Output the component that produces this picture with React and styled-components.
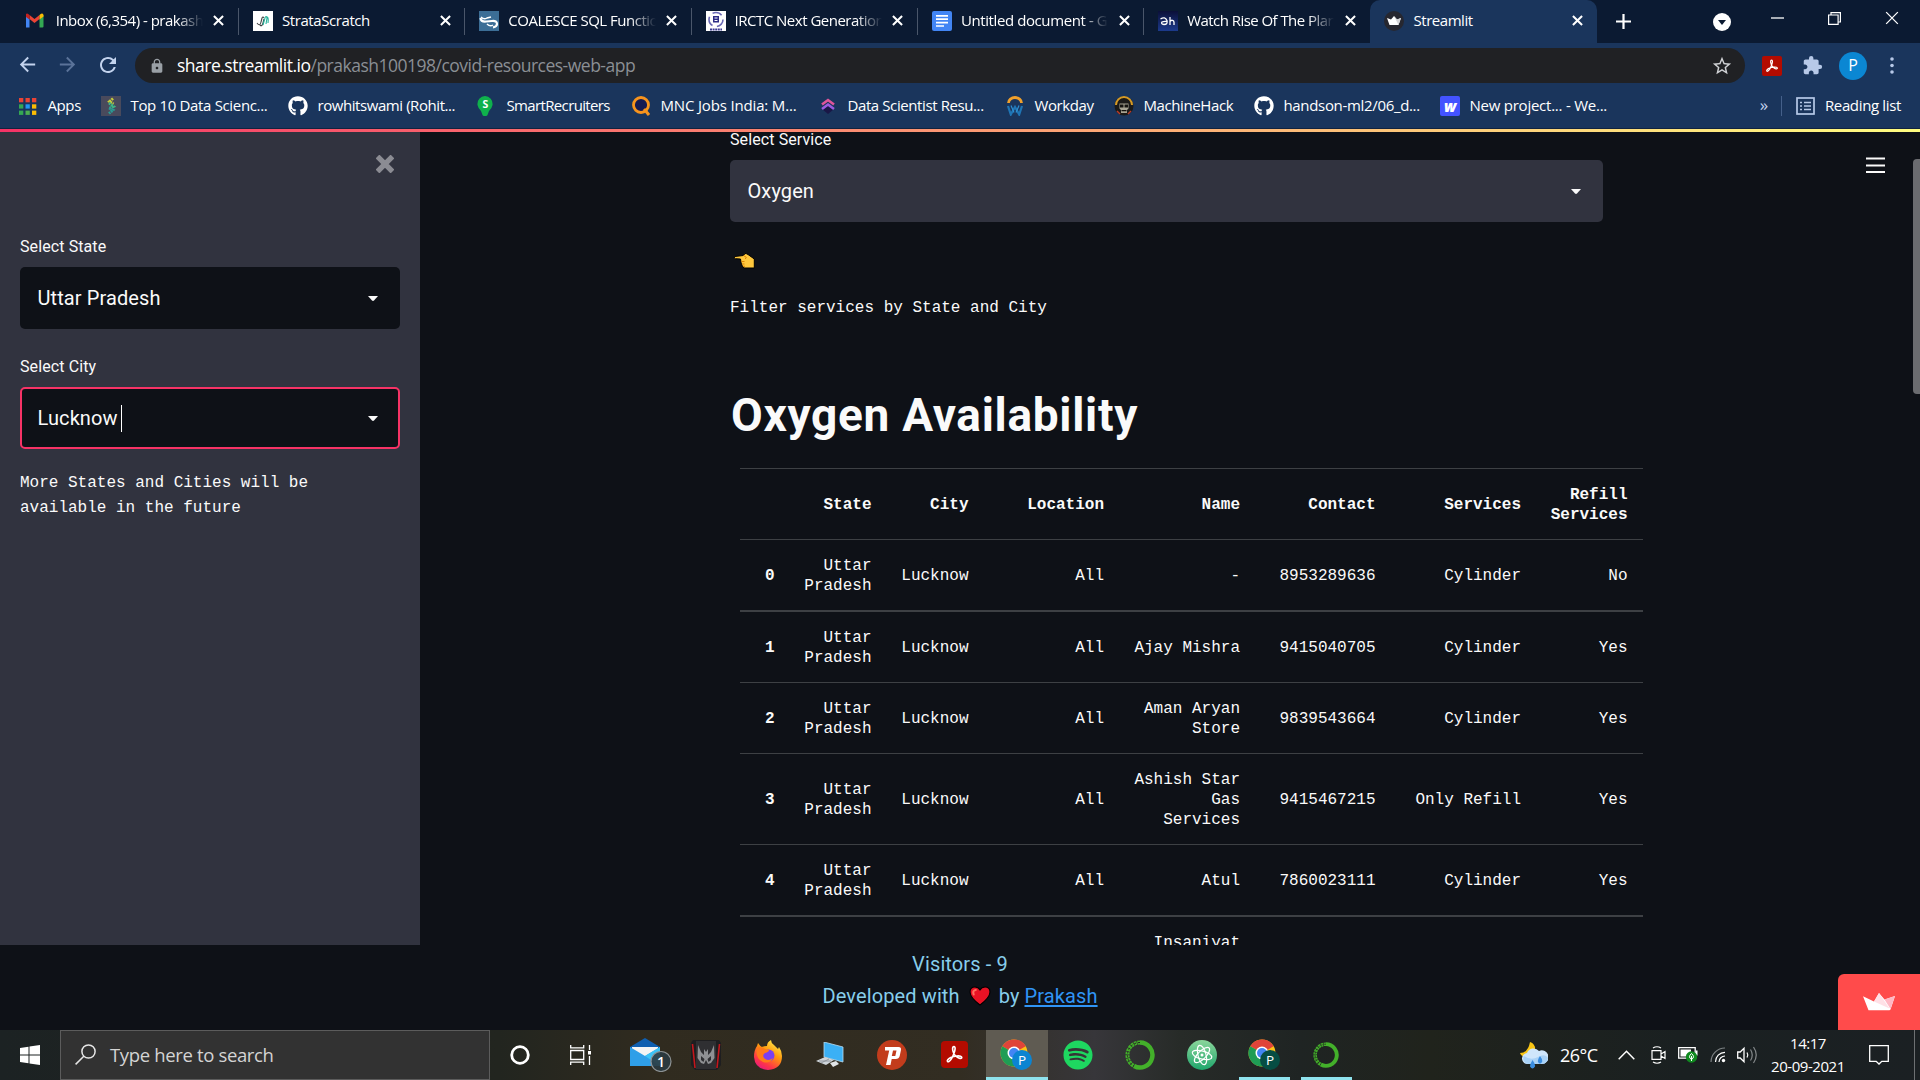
import React from "react";
import styled, { createGlobalStyle, css } from "styled-components";
import { FaGithub, FaSpotify } from "react-icons/fa";
import { MdExtension, MdLock, MdStarBorder, MdRefresh, MdArrowBack, MdArrowForward } from "react-icons/md";

const GlobalStyle = createGlobalStyle`
  * { box-sizing: border-box; }
  body { margin: 0; background: #0e1117; overflow: hidden; }
  svg { display: block; flex: none; }
`;

const ui = `"Open Sans", "Noto Sans", sans-serif`;
const plex = `Roboto, "Noto Sans", sans-serif`;
const mono = `"Liberation Mono", "DejaVu Sans Mono", monospace`;

const Screen = styled.div`
  width: 1920px;
  height: 1080px;
  display: flex;
  flex-direction: column;
  overflow: hidden;
  font-family: ${ui};
  color: #fff;
`;

/* ---------- browser chrome ---------- */

const TabStrip = styled.div`
  height: 43px;
  flex: none;
  display: flex;
  background: #0b1a32;
  padding-left: 12.7px;
`;

const Tab = styled.div`
  width: 226.3px;
  flex: none;
  display: flex;
  align-items: center;
  padding: 0 11px 2px 14px;
  font-size: 15px;
  border-right: 1px solid transparent;
  ${(p) => p.$divider && css`
    border-image: linear-gradient(transparent 9px, #4a566a 9px, #4a566a 34px, transparent 34px) 1;
  `}
  ${(p) => p.$active && css`
    background: #1a355c;
    border-radius: 10px 10px 0 0;
    width: 227px;
  `}
`;

const TabTitle = styled.div`
  flex: 1;
  margin: -1px 0 0 9px;
  overflow: hidden;
  white-space: nowrap;
  letter-spacing: ${(p) => p.$track || "-0.45px"};
  ${(p) => p.$fade && css`
    mask-image: linear-gradient(90deg, #000 calc(100% - 28px), transparent calc(100% - 2px));
  `}
`;

const CloseSlot = styled.div`
  width: 16px;
  margin-left: 6px;
  display: flex;
  justify-content: center;
`;

const NewTab = styled.div`
  width: 53px;
  display: flex;
  align-items: center;
  justify-content: center;
`;

const WindowControls = styled.div`
  margin-left: auto;
  display: flex;
  align-items: center;
`;

const WindowButton = styled.div`
  width: ${(p) => p.$w || 57}px;
  height: 36px;
  display: flex;
  align-items: center;
  justify-content: center;
  align-self: ${(p) => (p.$low ? "center" : "flex-start")};
`;

const Toolbar = styled.div`
  height: 45px;
  flex: none;
  display: flex;
  align-items: center;
  background: #1a355c;
`;

const NavGroup = styled.div`
  width: 135px;
  display: flex;
  gap: 17px;
  padding: 0 0 1px 16px;
  color: #c3d3ee;
`;

const Omnibox = styled.div`
  width: 1610px;
  height: 35px;
  display: flex;
  align-items: center;
  border-radius: 18px;
  background: #202124;
  padding: 0 12px 0 14px;
`;

const Url = styled.div`
  flex: 1;
  margin: -1px 0 0 12px;
  font-size: 17.5px;
  letter-spacing: -0.5px;
  color: #8b8f94;
  span { color: #fff; }
`;

const ExtensionGroup = styled.div`
  flex: 1;
  display: flex;
  align-items: center;
  padding-left: 17px;
`;

const ExtensionSlot = styled.div`
  margin-left: 20px;
  color: #b7c9e8;
`;

const Avatar = styled.div`
  width: 28px;
  height: 28px;
  margin: 0 23px 0 16px;
  border-radius: 50%;
  background: #0b87d3;
  font-size: 16px;
  line-height: 27px;
  text-align: center;
`;

const BookmarkBar = styled.div`
  height: 41px;
  flex: none;
  display: flex;
  align-items: center;
  background: #1a355c;
  border-bottom: 1px solid #11233f;
  padding: 0 0 4px 18px;
  font-size: 15px;
  white-space: nowrap;
`;

const Bookmark = styled.div`
  width: ${(p) => p.$w}px;
  display: flex;
  align-items: center;
  gap: ${(p) => p.$gap || 9.5}px;
  letter-spacing: ${(p) => p.$track || "-0.4px"};
`;

const BookmarkLabel = styled.span`
  margin-top: -2px;
`;

const IconSlot = styled.div`
  width: 20px;
  height: 20px;
  flex: none;
  display: flex;
  align-items: center;
  justify-content: center;
`;

const BookmarkEnd = styled.div`
  margin-left: auto;
  display: flex;
  align-items: center;
  padding-right: 19px;
  letter-spacing: -0.35px;
`;

const Overflow = styled.span`
  color: #c3d3ee;
  font-size: 17px;
  margin: -2px 13px 0 0;
  line-height: 20px;
`;

const Separator = styled.span`
  width: 1px;
  height: 20px;
  background: #45608a;
  margin-right: 14px;
`;

const ReadingLabel = styled.span`
  margin: -2px 0 0 10px;
`;

const FavTile = styled.div`
  width: ${(p) => p.$w || 20}px;
  height: 20px;
  border-radius: ${(p) => p.$r || 0}px;
  background: ${(p) => p.$bg};
  color: ${(p) => p.$fg || "#fff"};
  display: flex;
  align-items: center;
  justify-content: center;
  font: ${(p) => p.$font || `400 12px ${ui}`};
`;

/* ---------- streamlit page ---------- */

const RainbowLine = styled.div`
  height: 3px;
  flex: none;
  background: linear-gradient(90deg, #f63366, #fffd80);
`;

const Page = styled.div`
  height: 813px;
  flex: none;
  display: flex;
  position: relative;
  background: #0e1117;
  overflow: hidden;
  color: #fafafa;
`;

const Sidebar = styled.aside`
  width: 420px;
  flex: none;
  background: #31333f;
  padding: 23px 20px;
`;

const SidebarTop = styled.div`
  height: 79px;
  display: flex;
  justify-content: flex-end;
  padding-right: 6px;
`;

const Field = styled.div`
  margin-bottom: ${(p) => p.$gap || 25}px;
`;

const FieldLabel = styled.div`
  height: 33px;
  line-height: 25px;
  font-family: ${plex};
  font-size: 16px;
  letter-spacing: 0.1px;
`;

const SelectBox = styled.div`
  height: 62px;
  display: flex;
  align-items: center;
  justify-content: space-between;
  padding: 0 20.5px 0 15.5px;
  border-radius: 5px;
  border: 2px solid ${(p) => (p.$focused ? "#f63366" : "transparent")};
  background: ${(p) => p.$bg} border-box;
  font-family: ${plex};
  font-size: 20px;
  letter-spacing: 0.1px;
`;

const SelectValue = styled.span`
  display: flex;
  align-items: center;
`;

const TextCursor = styled.i`
  width: 1px;
  height: 27px;
  background: #fff;
  margin-left: 3px;
`;

const MonoText = styled.div`
  font-family: ${mono};
  font-size: 16px;
  line-height: 25px;
  white-space: pre-line;
`;

const Main = styled.main`
  width: 913px;
  margin-left: 310px;
  flex: none;
`;

const MainField = styled.div`
  width: 873px;
  padding-top: 28px;
  margin-top: -33px;
`;

const HandRow = styled.div`
  height: 74px;
  padding: 31px 0 0 3px;
`;

const Heading = styled.h1`
  margin: 66px 0 0 1px;
  height: 81px;
  font: 700 46px/56px ${plex};
  letter-spacing: 0.7px;
`;

const Table = styled.table`
  width: 903px;
  margin-left: 10px;
  table-layout: fixed;
  border-spacing: 0;
  font: 16px/20px ${mono};
`;

const Row = styled.tr`
  height: ${(p) => p.$h}px;
  th, td { border-top: ${(p) => p.$line || 1}px solid #3d4044; }
`;

const cell = css`
  padding: 2px 15.5px 0 10px;
  text-align: right;
  vertical-align: middle;
`;

const Th = styled.th`
  ${cell}
  font-weight: 700;
`;

const Td = styled.td`
  ${cell}
`;

const MenuButton = styled.div`
  position: absolute;
  top: 25px;
  right: 35px;
`;

const ScrollThumb = styled.div`
  position: absolute;
  top: 27px;
  right: 0;
  width: 7px;
  height: 235px;
  border-radius: 4px 0 0 4px;
  background: #6b6c70;
`;

const Footer = styled.footer`
  height: 85px;
  flex: none;
  position: relative;
  display: flex;
  flex-direction: column;
  align-items: center;
  padding-top: 3px;
  background: #0e1117;
  color: #87ceeb;
  font: 20px/32px ${plex};
`;

const FooterLine = styled.div`
  display: flex;
  align-items: center;
  letter-spacing: 0.12px;
`;

const Heart = styled.span`
  margin: 0 8px 0 9px;
`;

const Author = styled.a`
  margin-left: 5px;
  color: #3094f5;
  text-decoration: underline;
  text-decoration-thickness: 2px;
  text-underline-offset: 2px;
  text-decoration-skip-ink: none;
`;

const HostBadge = styled.div`
  position: absolute;
  right: 0;
  bottom: 0;
  width: 82px;
  height: 56px;
  border-top-left-radius: 6px;
  background: #ff4b4b;
  display: flex;
  align-items: center;
  justify-content: center;
`;

/* ---------- taskbar ---------- */

const Taskbar = styled.div`
  height: 50px;
  flex: none;
  display: flex;
  background: linear-gradient(90deg, #1c2223 0, #22251f 500px, #302b1f 650px, #322d22 960px, #37363a 1095px, #272b28 1180px, #1f2423 1300px, #20231c 1430px, #1a2021 1680px, #1b2023 100%);
`;

const StartButton = styled.div`
  width: 60px;
  display: flex;
  align-items: center;
  padding: 0 0 1px 20px;
`;

const SearchBox = styled.div`
  width: 430px;
  border: 1px solid #5c5c5c;
  background: #323232;
  display: flex;
  align-items: center;
  padding: 0 0 2px 14px;
  font-size: 18.5px;
  letter-spacing: -0.35px;
  color: #d4d4d4;
  gap: 14px;
`;

const TaskItem = styled.div`
  width: 62px;
  display: flex;
  align-items: center;
  justify-content: center;
  padding: 0 2px 1px 0;
  ${(p) => p.$active && css`
    background: #5f5b52;
    box-shadow: inset 0 -3px #8fe3ee;
  `}
  ${(p) => p.$running && css`
    background: linear-gradient(#8fe3ee, #8fe3ee) 5px bottom / 51px 3px no-repeat;
  `}
`;

const Tray = styled.div`
  flex: 1;
  display: flex;
  align-items: center;
  padding-left: 162px;
`;

const Temperature = styled.div`
  width: 58px;
  margin-left: 12px;
  font-size: 18px;
  letter-spacing: -0.5px;
`;

const TrayIcon = styled.div`
  width: ${(p) => p.$w}px;
  display: flex;
`;

const Clock = styled.div`
  width: 80px;
  text-align: center;
  font-size: 15px;
  line-height: 23px;
  letter-spacing: -0.45px;
  white-space: nowrap;
`;

const ActionCenter = styled.div`
  margin-left: 21px;
`;

const ShowDesktop = styled.div`
  width: 6px;
  height: 50px;
  margin-left: auto;
  border-left: 1px solid #6d7072;
`;

/* ---------- drawings ---------- */

const Cross = ({ size = 11, w = 2.2, color = "#fff" }) => (
  <svg width={size} height={size} viewBox="0 0 12 12">
    <path d="M1 1L11 11M11 1L1 11" stroke={color} strokeWidth={w} />
  </svg>
);

const Gmail = () => (
  <svg width="22" height="15" viewBox="1.5 0 22 15">
    <path d="M1 2v11.5q0 1 1 1h3V6z" fill="#4285f4" />
    <path d="M19 2v11.5q0 1-1 1h-3V6z" fill="#34a853" />
    <path d="M5 6V2l5 4 5-4v4l-5 4z" fill="#ea4335" />
    <path d="M1 2.5Q1 0 3.4.7L5 2v4.5L1 3.6z" fill="#c5221f" />
    <path d="M19 2.5Q19 0 16.6.7L15 2v4.5l4-3z" fill="#fbbc04" />
  </svg>
);

const Strata = () => (
  <svg width="20" height="20" viewBox="0 0 20 20">
    <path fill="#fff" d="M0 0h20v20H0z" />
    <path d="M4 12q3 4 4-1l1-4q1-2 2 0M7 14q2 2 3-2l1-4" fill="none" stroke="#444" strokeWidth="1.1" />
    <path d="M10 14l2-7q1-3 2 0l-1 6M13 6q3-1 2 6" fill="none" stroke="#27b39b" strokeWidth="1.1" />
  </svg>
);

const SqlTutorial = () => (
  <svg width="20" height="20" viewBox="0 0 20 20">
    <path fill="#3c6e96" d="M0 0h20v20H0z" />
    <path d="M1.500 7Q2 11 7 10.500l6-.5q5-.5 5 3 0 2.500-4 3.500" fill="none" stroke="#fff" strokeWidth="2.200" />
    <path d="M2 6q3 3 6 1l4-1M8 13q3 3 6 1" fill="none" stroke="#fff" strokeWidth="1.500" />
  </svg>
);

const Irctc = () => (
  <svg width="20" height="20" viewBox="0 0 20 20">
    <path fill="#fff" d="M0 0h20v20H0z" />
    <circle cx="10" cy="8.5" r="7" fill="none" stroke="#6a69b5" strokeWidth="1.6" strokeDasharray="10 4.600" />
    <path d="M7 5h6v6.500H7z" fill="#2d2c86" />
    <path d="M8.500 7h3M8.500 9.500h3" stroke="#fff" />
    <path d="M4 18.500h12" stroke="#3b3a93" strokeWidth="2" strokeDasharray="2 .6" />
  </svg>
);

const Docs = () => (
  <svg width="20" height="20" viewBox="0 0 20 20">
    <rect width="20" height="20" rx="2" fill="#4285f4" />
    <path d="M4 4.800h12M4 8.200h12M4 11.600h12M4 15h8" stroke="#fff" strokeWidth="1.700" />
  </svg>
);

const Hotstar = () => (
  <svg width="20" height="20" viewBox="0 0 20 20">
    <defs>
      <linearGradient id="hs" x1="0" y1="0" x2="0" y2="1">
        <stop stopColor="#0b0f38" />
        <stop offset="1" stopColor="#1c3a8c" />
      </linearGradient>
    </defs>
    <path fill="url(#hs)" d="M0 0h20v20H0z" />
    <path d="M2.500 8Q7 5 9 9.500 10 13.500 6 13.500 2.500 13 4 11q2-1 5-.5M12 6v8M12 10.500q1-1.500 2.500-1.200 1.500.3 1.500 2V14" fill="none" stroke="#fff" strokeWidth="1.300" />
  </svg>
);

const CrownTab = () => (
  <svg width="20" height="20" viewBox="0 0 20 20">
    <circle cx="10" cy="10" r="10" fill="#262730" />
    <path d="M3 7l4 1.500L10 5l3 3.500L17 7l-2.500 7h-9z" fill="#fff" />
    <path d="M10 5l3 3.500L17 7l-2.500 7z" fill="#d5d5d8" />
  </svg>
);

const AppsGrid = () => (
  <svg width="18" height="17" viewBox="0 0 18 17">
    {["#ea4335", "#ea4335", "#ea4335", "#34a853", "#2196f3", "#fbbc04", "#34a853", "#4caf50", "#fbbc04"].map((c, i) => (
      <rect key={i} x={(i % 3) * 6.5} y={Math.floor(i / 3) * 6.3} width="4.3" height="4.3" fill={c} />
    ))}
  </svg>
);

const DataSnake = () => (
  <svg width="20" height="20" viewBox="0 0 20 20">
    <path fill="#494a5c" d="M0 0h20v20H0z" />
    <path d="M12 2.500L8.500 5.500l4 2.500" fill="none" stroke="#c8cf3c" strokeWidth="2.800" strokeDasharray="2 .7" />
    <path d="M8 7l4.500 3.500-4.500 2" fill="none" stroke="#3fb588" strokeWidth="2.800" strokeDasharray="2 .7" />
    <path d="M8 12l4 2-4 3.500" fill="none" stroke="#2a9a94" strokeWidth="2.800" strokeDasharray="2 .7" />
  </svg>
);

const SmartPin = () => (
  <svg width="16" height="20" viewBox="0 0 16 20">
    <path d="M8 0a8 8 0 0 1 7.5 9Q15 12 12 15l-1.500 4q-.3 1-1.500 1H7q-1.200 0-1.500-1L4 15Q1 12 .5 9A8 8 0 0 1 8 0z" fill="#0fb14c" />
    <text x="8" y="11.500" textAnchor="middle" fontFamily="Open Sans" fontWeight="700" fontSize="10.500" fill="#fff">S</text>
  </svg>
);

const QuestIcon = () => (
  <svg width="20" height="20" viewBox="0 0 20 20">
    <circle cx="10" cy="9" r="7.5" fill="#151b52" stroke="#f7941d" strokeWidth="2.800" />
    <path d="M13 13l5 6" stroke="#f7941d" strokeWidth="3" />
  </svg>
);

const ChevronLogo = () => (
  <svg width="14" height="18" viewBox="0 0 14 18">
    <path d="M1 12l6-4 6 4-6 5z" fill="#1a1747" />
    <path d="M1 7.500l6-4.500 6 4.500" fill="none" stroke="#e0559a" strokeWidth="2.600" />
    <path d="M1 12l6-4.500 6 4.500" fill="none" stroke="#9b5be0" strokeWidth="2.600" />
  </svg>
);

const WorkdayIcon = () => (
  <svg width="18" height="20" viewBox="0 0 18 20">
    <path d="M2.500 7a6.500 5.500 0 0 1 13 0" fill="none" stroke="#f0a02c" strokeWidth="2.800" />
    <path d="M2 10l2.800 8.500L9 11l4.200 7.500L16 10" fill="none" stroke="#1f75b5" strokeWidth="2.200" />
    <path d="M5 9.500l3 7M13 9.500l-3 7" stroke="#2f8fd0" strokeWidth="1.200" />
  </svg>
);

const HackIcon = () => (
  <svg width="20" height="20" viewBox="0 0 20 20">
    <circle cx="10" cy="10" r="9.5" fill="#1b1a18" />
    <path d="M2 9a8 8 0 0 1 16 0" fill="none" stroke="#d59a26" strokeWidth="2" />
    <path d="M5.500 7.500h9v5l-1.500 1.500v3H7v-3l-1.500-1.500z" fill="#a8a493" />
    <path d="M6 8.500h3.500v3H6zM10.500 8.500H14v3h-3.500zM7.500 14h5v1.200h-5z" fill="#14130f" />
    <path d="M3 15l3 3M17 15l-3 3" stroke="#b83b2a" strokeWidth="1.500" />
  </svg>
);

const ReadingIcon = () => (
  <svg width="19" height="18" viewBox="0 0 19 18">
    <rect x="1" y="1" width="17" height="16" fill="none" stroke="#b7c9e8" strokeWidth="1.700" />
    <path d="M4 5.500h2M8 5.500h7M4 9h2M8 9h7M4 12.500h2M8 12.500h7" stroke="#b7c9e8" strokeWidth="1.600" />
  </svg>
);

const AcrobatMark = ({ size, r = 2 }) => (
  <svg width={size} height={size} viewBox="0 0 20 20">
    <rect width="20" height="20" rx={r} fill="#b30b00" />
    <path d="M9.600 4.200c1.300 0 .9 2.600.1 4.700-.9 2.500-2.500 5.400-3.700 6.200-1 .7-1.800-.2-1-1.200 1.100-1.400 4.300-2.600 6.800-2.800 2.300-.2 3.700.3 3.600 1.200-.1 1-2.200.7-3.900-.7-1.600-1.300-2.800-3.700-2.900-5.700 0-1 .4-1.700 1-1.700z" fill="none" stroke="#fff" strokeWidth="1.200" />
  </svg>
);

const Dots = () => (
  <svg width="4" height="17" viewBox="0 0 4 17">
    {[2, 8.5, 15].map((y) => <circle key={y} cx="2" cy={y} r="1.8" fill="#b7c9e8" />)}
  </svg>
);

const Caret = () => (
  <svg width="10" height="5" viewBox="0 0 10 5"><path d="M0 0h10L6 4.600q-1 .8-2 0z" fill="#fafafa" /></svg>
);

const Hand = () => (
  <svg width="22" height="16" viewBox="0 0 22 16">
    <path d="M1.500 3.500q-1 2.200 1 2.200l5 .3q.3 4.500 1.800 7L11 15h10.300V6L15 1.500q-1.500-1-3-1l-1.500 2z" fill="#ffc83d" stroke="#000" strokeWidth="1" />
    <path d="M10.500 2.500l2.800 1.800-1 1.700M8.500 8.500h3M9 11h2.500M10 13.300h2" fill="none" stroke="#d67d00" strokeWidth=".9" />
  </svg>
);

const HeartMark = () => (
  <svg width="22" height="20" viewBox="0 0 21 20" preserveAspectRatio="none">
    <path d="M10.500 19Q1 11.500 1 6q0-5 4.700-5 3.300 0 4.800 3Q12 1 15.300 1 20 1 20 6q0 5.500-9.500 13z" fill="#e81224" stroke="#000" strokeWidth="1" />
    <path d="M4.500 8.500Q3 4.500 6.500 4" fill="none" stroke="#ff6d5e" strokeWidth="2" strokeLinecap="round" />
  </svg>
);

const PaperCrown = () => (
  <svg width="32" height="18" viewBox="0 0 32 18">
    <path d="M0 3.300l11 5.200L16 0l5.500 6.500L32 3l-4.500 13.500-1 .8H5.500z" fill="#fff" />
    <path d="M11 8.500L16 0l10.500 15.500z" fill="#ffe0e6" />
    <path d="M21.500 6.500L32 3l-4.500 13z" fill="#ffb8c4" />
  </svg>
);

const Burger = () => (
  <svg width="19" height="17" viewBox="0 0 19 17"><path d="M0 1.500h19M0 8.500h19M0 15h19" stroke="#fafafa" strokeWidth="2" /></svg>
);

const WindowsLogo = () => (
  <svg width="20" height="20" viewBox="0 0 20 20">
    <path d="M0 3l8.500-1.200v7.700H0zM9.500 1.600L20 0v9.500H9.500zM0 10.500h8.500v7.700L0 17zM9.500 10.500H20V20L9.500 18.500z" fill="#fff" />
  </svg>
);

const Magnifier = () => (
  <svg width="21" height="21" viewBox="0 0 21 21">
    <circle cx="13.500" cy="7.500" r="6.600" fill="none" stroke="#e6e6e6" strokeWidth="1.500" />
    <path d="M8.800 12.200L.6 20.400" stroke="#e6e6e6" strokeWidth="1.500" />
  </svg>
);

const TaskView = () => (
  <svg width="24" height="20" viewBox="2 0 24 20">
    <path d="M.7 0v2.800h13V0M.7 20v-2.800h13V20M.7 5.500h13v9H.7zM19.500 0v5M19.500 11v9" fill="none" stroke="#fff" strokeWidth="1.300" transform="translate(2)" />
    <path d="M20 6h3v3.500h-3z" fill="#fff" />
  </svg>
);

const Mail = () => (
  <svg width="56" height="34" viewBox="-14 0 56 34">
    <path d="M0 9L15 0l15 9v19H0z" fill="#0f5fb0" />
    <path d="M2 9h26v12H2z" fill="#f4f4f4" />
    <path d="M0 9l15 9 15-9v19H0z" fill="#2f9fe8" />
    <path d="M15 18l15-9v19z" fill="#3cc4f7" />
    <circle cx="31" cy="23.500" r="10" fill="#2b3a40" fillOpacity=".9" stroke="#8d9294" strokeWidth="1.200" />
    <text x="31" y="28.500" textAnchor="middle" fontFamily="Open Sans" fontSize="14" fontWeight="600" fill="#fff">1</text>
  </svg>
);

const Predator = () => (
  <svg width="30" height="30" viewBox="0 0 30 30">
    <path d="M2 0h26l2 3v22l-4 5H4l-4-5V3z" fill="#1e1e20" />
    <path d="M5 1h20v28H5z" fill="#2f2f32" />
    <path d="M1.500 4L4 28M28.500 4L26 28" stroke="#c4161c" strokeWidth="1.600" />
    <path d="M7 5l3 7 3 3V9l2 3 2-3v6l3-3 3-7 .5 13-3.500 5-3 1-2-4-2 4-3-1-3.500-5z" fill="#8f9093" />
    <path d="M10 16l3.500 3-1 3-2.500-2zM20 16l-3.500 3 1 3 2.500-2z" fill="#2f2f32" />
  </svg>
);

const Firefox = () => (
  <svg width="30" height="30" viewBox="0 0 30 30">
    <defs>
      <linearGradient id="ff" x1=".8" y1="0" x2=".2" y2="1">
        <stop stopColor="#fff44f" /><stop offset=".4" stopColor="#ff980e" /><stop offset=".75" stopColor="#ff3647" /><stop offset="1" stopColor="#e31587" />
      </linearGradient>
    </defs>
    <path d="M4 6l1-3q2 3 4 4 2-1 5-1 0-4 4-6 0 3 3 5 2 2 4 4l1-2q3 4 3 9 0 13-14 14Q2 29 1 17 1 10 4 6z" fill="url(#ff)" />
    <circle cx="15.500" cy="15.500" r="6" fill="#7a3ff2" />
    <path d="M4 8q4-2 8 1l4 1q0 2-4 3-3 2-1 5 4 4 9 0-3 6-10 4Q2 19 4 8z" fill="#ff7a1a" />
  </svg>
);

const Pc = () => (
  <svg width="28" height="26" viewBox="0 0 28 26">
    <path d="M8 0l19 5v15L8 15z" fill="#3bb0f5" stroke="#b9dcf0" strokeWidth=".8" />
    <path d="M0 19l9-4 9 3-8 5z" fill="#cfd5da" /><path d="M3 19l12 0M5 21l8-4" stroke="#858c92" strokeWidth=".8" />
    <path d="M14 21l6-2 3 3-6 3z" fill="#e1e5e8" />
  </svg>
);

const PyP = () => (
  <svg width="30" height="30" viewBox="0 0 30 30">
    <circle cx="15" cy="15" r="15" fill="#c23c1c" />
    <path d="M8 7h13.500q3 0 2.500 3l-1.300 6q-.7 3-4 3h-4l-1.200 6H9l3.200-14.500H8zM16 10.500l-1.200 5.500h3.500l1.200-5.500z" fill="#fff" fillRule="evenodd" />
  </svg>
);

const ChromeMark = ({ badge }) => (
  <svg width="33" height="32" viewBox="0 0 33 32">
    <circle cx="14" cy="14" r="13.500" fill="#fbc116" />
    <path d="M14 14L2.300 7.200A13.500 13.500 0 0 1 25.700 7.200z" fill="#e0443a" />
    <path d="M14 14L2.300 7.200A13.500 13.500 0 0 0 14 27.500l5-10z" fill="#1f9d55" />
    <circle cx="14" cy="14" r="6.500" fill="#fff" />
    <circle cx="14" cy="14" r="5" fill="#4285f4" />
    <circle cx="22" cy="21" r="10" fill={badge} />
    <text x="22" y="26" textAnchor="middle" fontFamily="Open Sans" fontSize="13.500" fill="#fff">P</text>
  </svg>
);

const Anaconda = ({ size }) => (
  <svg width={size} height={size} viewBox="0 0 30 30">
    <path d="M15 2.500a12.500 12.500 0 1 1-6 23.500" fill="none" stroke="#43b02a" strokeWidth="4.500" />
    <path d="M15 2.500a12.500 12.500 0 0 0-6 23.500" fill="none" stroke="#43b02a" strokeWidth="4" strokeDasharray="2.600 .7" />
    <path d="M15 2.500a12.500 12.500 0 0 0-6 23.500" fill="none" stroke="#24291f" strokeWidth="1" strokeDasharray="2 2" />
  </svg>
);

const AtomMark = () => (
  <svg width="30" height="30" viewBox="0 0 30 30">
    <defs><linearGradient id="at" x1="0" y1="0" x2="0" y2="1"><stop stopColor="#8bd69b" /><stop offset="1" stopColor="#1fa66c" /></linearGradient></defs>
    <circle cx="15" cy="15" r="15" fill="url(#at)" />
    {[15, 75, 135].map((a) => (
      <ellipse key={a} cx="15" cy="15" rx="10" ry="4" fill="none" stroke="#fff" strokeWidth="1.200" transform={`rotate(${a} 15 15)`} />
    ))}
    <circle cx="15" cy="15" r="1.500" fill="#fff" />
  </svg>
);

const Weather = () => (
  <svg width="28" height="27" viewBox="0 0 28 27">
    <path d="M10 0q6 2 5 9l-8 6Q1 15 0 11q8 0 10-11z" fill="#f9c514" />
    <path d="M8 22a5.500 5.500 0 0 1-1-11 7 7 0 0 1 12-2 6.800 6.800 0 1 1 3 13z" fill="#cfe6fb" />
    <path d="M8 22a5.500 5.500 0 0 1-4-8q7 5 14 1t10 1q-1 6-6 6z" fill="#a9d2f7" />
    <path d="M12.500 18q3 4 2.500 6.500-2.500 4-5 0Q10 22 12.500 18zM20 14q3 4 2 6-2 3-4 0-.7-2 2-6z" fill="#3a8de0" />
  </svg>
);

const ChevronUp = () => (
  <svg width="17" height="10" viewBox="0 0 17 10"><path d="M.7 9.300l7.800-8 7.800 8" fill="none" stroke="#fff" strokeWidth="1.500" /></svg>
);

const MeetNow = () => (
  <svg width="15" height="18" viewBox="0 0 15 18">
    <path d="M1 4.700h9v8.600H1zM10 8l4-2.500v7L10 10M2 2q4-2.500 8 0M2 16q4 2.500 8 0" fill="none" stroke="#fff" strokeWidth="1.200" />
  </svg>
);

const Battery = () => (
  <svg width="20" height="16" viewBox="0 0 20 16">
    <path d="M.7.700h16.500v10.500H.7z" fill="none" stroke="#fff" strokeWidth="1.300" />
    <path d="M2.500 2.500H13v7H2.500zM18 3.500h1.500v5H18z" fill="#fff" />
    <circle cx="13.500" cy="10" r="5.700" fill="#0f8a1f" />
    <path d="M13.500 6.500q4 3.500 0 6-4-2.500 0-6zM13.500 9v5" fill="none" stroke="#fff" strokeWidth="1" />
  </svg>
);

const Wifi = () => (
  <svg width="16" height="16" viewBox="0 0 16 16" fill="none">
    <circle cx="13.500" cy="13.500" r="1.700" fill="#fff" />
    <path d="M9 15a6 6 0 0 1 6-6M5.500 15A9.500 9.500 0 0 1 15 5.300" stroke="#fff" strokeWidth="1.200" />
    <path d="M1 15A14 14 0 0 1 15 1" stroke="#7d8284" strokeWidth="1.200" />
  </svg>
);

const Speaker = () => (
  <svg width="21" height="18" viewBox="0 0 21 18" fill="none">
    <path d="M.7 6h2.500L7 2.300v13.400L3.200 12H.7z" stroke="#fff" strokeWidth="1.300" />
    <path d="M10 6.500q1.600 2.500 0 5" stroke="#fff" strokeWidth="1.200" />
    <path d="M13.500 3.500q3.500 5.500 0 11M16.500 1q5.500 8 0 16" stroke="#85898b" strokeWidth="1.200" />
  </svg>
);

const Notice = () => (
  <svg width="20" height="20" viewBox="0 0 20 20">
    <path d="M.7.700h18.600v15.600h-6.500L10 19l-2.800-2.700H.7z" fill="none" stroke="#fff" strokeWidth="1.300" />
  </svg>
);

/* ---------- data ---------- */

const tabs = [
  { icon: <Gmail />, title: "Inbox (6,354) - prakash", fade: true, track: "-0.5px" },
  { icon: <Strata />, title: "StrataScratch", track: "-0.42px" },
  { icon: <SqlTutorial />, title: "COALESCE SQL Functio", fade: true, track: "-0.5px" },
  { icon: <Irctc />, title: "IRCTC Next Generation", fade: true, track: "-0.5px" },
  { icon: <Docs />, title: "Untitled document - G", fade: true, track: "-0.4px" },
  { icon: <Hotstar />, title: "Watch Rise Of The Plan", fade: true, track: "-0.55px" },
  { icon: <CrownTab />, title: "Streamlit", active: true },
];

const bookmarks = [
  { w: 83, icon: <AppsGrid />, label: "Apps" },
  { w: 187, icon: <DataSnake />, label: "Top 10 Data Scienc...", track: "-0.34px" },
  { w: 187, icon: <FaGithub size={20} />, label: "rowhitswami (Rohit...", track: "-0.43px" },
  { w: 156, icon: <SmartPin />, label: "SmartRecruiters", gap: 11.5, track: "-0.64px" },
  { w: 187, icon: <QuestIcon />, label: "MNC Jobs India: M...", track: "-0.16px" },
  { w: 187, icon: <ChevronLogo />, label: "Data Scientist Resu..." },
  { w: 109, icon: <WorkdayIcon />, label: "Workday" },
  { w: 140, icon: <HackIcon />, label: "MachineHack" },
  { w: 186, icon: <FaGithub size={20} />, label: "handson-ml2/06_d...", track: "-0.33px" },
  { w: 187, icon: <FavTile $bg="#4353ff" $r={2} $font={`italic 800 15px ${ui}`}>w</FavTile>, label: "New project... - We...", track: "-0.24px" },
];

const columns = [50, 97, 97, 135.5, 136, 135.5, 145.5, 106.5];
const headers = ["", "State", "City", "Location", "Name", "Contact", "Services", "Refill Services"];
const rows = [
  { h: 71, cells: ["-", "8953289636", "Cylinder", "No"] },
  { h: 72, line: 2, cells: ["Ajay Mishra", "9415040705", "Cylinder", "Yes"] },
  { h: 71, cells: ["Aman Aryan Store", "9839543664", "Cylinder", "Yes"] },
  { h: 91, cells: ["Ashish Star Gas Services", "9415467215", "Only Refill", "Yes"] },
  { h: 71, cells: ["Atul", "7860023111", "Cylinder", "Yes"] },
];

const tasks = [
  { icon: <svg width="20" height="20" viewBox="0 0 20 20"><circle cx="10" cy="10" r="8.300" fill="none" stroke="#fff" strokeWidth="2.800" /></svg> },
  { icon: <TaskView /> },
  { icon: <Mail /> },
  { icon: <Predator /> },
  { icon: <Firefox /> },
  { icon: <Pc /> },
  { icon: <PyP /> },
  { icon: <AcrobatMark size={27} r={3} /> },
  { icon: <ChromeMark badge="#0b84d2" />, active: true },
  { icon: <FaSpotify size={30} color="#1ed760" /> },
  { icon: <Anaconda size={30} /> },
  { icon: <AtomMark /> },
  { icon: <ChromeMark badge="#064d43" />, running: true },
  { icon: <Anaconda size={26} />, running: true },
];

const Select = ({ label, value, bg, focused }) => (
  <>
    <FieldLabel>{label}</FieldLabel>
    <SelectBox $bg={bg} $focused={focused}>
      <SelectValue>{value}{focused && <TextCursor />}</SelectValue>
      <Caret />
    </SelectBox>
  </>
);

export default function App() {
  return (
    <Screen>
      <GlobalStyle />
      <TabStrip>
        {tabs.map((t, i) => (
          <Tab key={t.title} $active={t.active} $divider={i < 5}>
            <IconSlot>{t.icon}</IconSlot>
            <TabTitle $fade={t.fade} $track={t.track}>{t.title}</TabTitle>
            <CloseSlot><Cross /></CloseSlot>
          </Tab>
        ))}
        <NewTab>
          <svg width="15" height="15" viewBox="0 0 15 15"><path d="M7.500 0v15M0 7.500h15" stroke="#fff" strokeWidth="2.200" /></svg>
        </NewTab>
        <WindowControls>
          <WindowButton $w={54} $low>
            <svg width="18" height="18" viewBox="0 0 18 18"><circle cx="9" cy="9" r="9" fill="#fff" /><path d="M5 7h8l-4 5z" fill="#0b1a32" /></svg>
          </WindowButton>
          <WindowButton>
            <svg width="13" height="2"><path d="M0 1h13" stroke="#fff" strokeWidth="1.300" /></svg>
          </WindowButton>
          <WindowButton>
            <svg width="13" height="13" viewBox="0 0 13 13"><path d="M.6 3h9.500v9.400H.6zM3 3V.600h9.400V10h-2.300" fill="none" stroke="#fff" strokeWidth="1.200" /></svg>
          </WindowButton>
          <WindowButton><Cross size={14} w={1.1} /></WindowButton>
        </WindowControls>
      </TabStrip>

      <Toolbar>
        <NavGroup>
          <MdArrowBack size={23} />
          <MdArrowForward size={23} color="#5b7399" />
          <MdRefresh size={24} />
        </NavGroup>
        <Omnibox>
          <MdLock size={16} color="#9aa0a6" />
          <Url><span>share.streamlit.io</span>/prakash100198/covid-resources-web-app</Url>
          <MdStarBorder size={22} color="#d0d2d5" />
        </Omnibox>
        <ExtensionGroup>
          <AcrobatMark size={20} />
          <ExtensionSlot><MdExtension size={21} /></ExtensionSlot>
          <Avatar>P</Avatar>
          <Dots />
        </ExtensionGroup>
      </Toolbar>

      <BookmarkBar>
        {bookmarks.map((b) => (
          <Bookmark key={b.label} $w={b.w} $gap={b.gap} $track={b.track}>
            <IconSlot>{b.icon}</IconSlot>
            <BookmarkLabel>{b.label}</BookmarkLabel>
          </Bookmark>
        ))}
        <BookmarkEnd>
          <Overflow>»</Overflow>
          <Separator />
          <ReadingIcon />
          <ReadingLabel>Reading list</ReadingLabel>
        </BookmarkEnd>
      </BookmarkBar>

      <RainbowLine />
      <Page>
        <Sidebar>
          <SidebarTop><Cross size={18} w={3.6} color="#8b8c93" /></SidebarTop>
          <Field><Select label="Select State" value="Uttar Pradesh" bg="#0e1117" /></Field>
          <Field $gap={22}><Select label="Select City" value="Lucknow" bg="#0e1117" focused /></Field>
          <MonoText>{"More States and Cities will be\navailable in the future"}</MonoText>
        </Sidebar>
        <Main>
          <MainField><Select label="Select Service" value="Oxygen" bg="#31333f" /></MainField>
          <HandRow><Hand /></HandRow>
          <MonoText>Filter services by State and City</MonoText>
          <Heading>Oxygen Availability</Heading>
          <Table>
            <colgroup>{columns.map((w, i) => <col key={i} style={{ width: w }} />)}</colgroup>
            <thead>
              <Row $h={71}>{headers.map((h) => <Th key={h}>{h}</Th>)}</Row>
            </thead>
            <tbody>
              {rows.map((r, i) => (
                <Row key={i} $h={r.h} $line={r.line}>
                  <Th>{i}</Th>
                  <Td>Uttar Pradesh</Td>
                  <Td>Lucknow</Td>
                  <Td>All</Td>
                  {r.cells.map((c) => <Td key={c}>{c}</Td>)}
                </Row>
              ))}
              <Row $h={51} $line={2}>
                <Td colSpan={4} />
                <Td>Insaniyat</Td>
                <Td colSpan={3} />
              </Row>
            </tbody>
          </Table>
        </Main>
        <MenuButton><Burger /></MenuButton>
        <ScrollThumb />
      </Page>

      <Footer>
        <FooterLine>Visitors - 9</FooterLine>
        <FooterLine>
          Developed with<Heart><HeartMark /></Heart>by<Author>Prakash</Author>
        </FooterLine>
        <HostBadge><PaperCrown /></HostBadge>
      </Footer>

      <Taskbar>
        <StartButton><WindowsLogo /></StartButton>
        <SearchBox><Magnifier />Type here to search</SearchBox>
        {tasks.map((t, i) => (
          <TaskItem key={i} $active={t.active} $running={t.running}>{t.icon}</TaskItem>
        ))}
        <Tray>
          <Weather />
          <Temperature>26°C</Temperature>
          <TrayIcon $w={33}><ChevronUp /></TrayIcon>
          <TrayIcon $w={27}><MeetNow /></TrayIcon>
          <TrayIcon $w={32}><Battery /></TrayIcon>
          <TrayIcon $w={27}><Wifi /></TrayIcon>
          <TrayIcon $w={31}><Speaker /></TrayIcon>
          <Clock>14:17<br />20-09-2021</Clock>
          <ActionCenter><Notice /></ActionCenter>
          <ShowDesktop />
        </Tray>
      </Taskbar>
    </Screen>
  );
}
